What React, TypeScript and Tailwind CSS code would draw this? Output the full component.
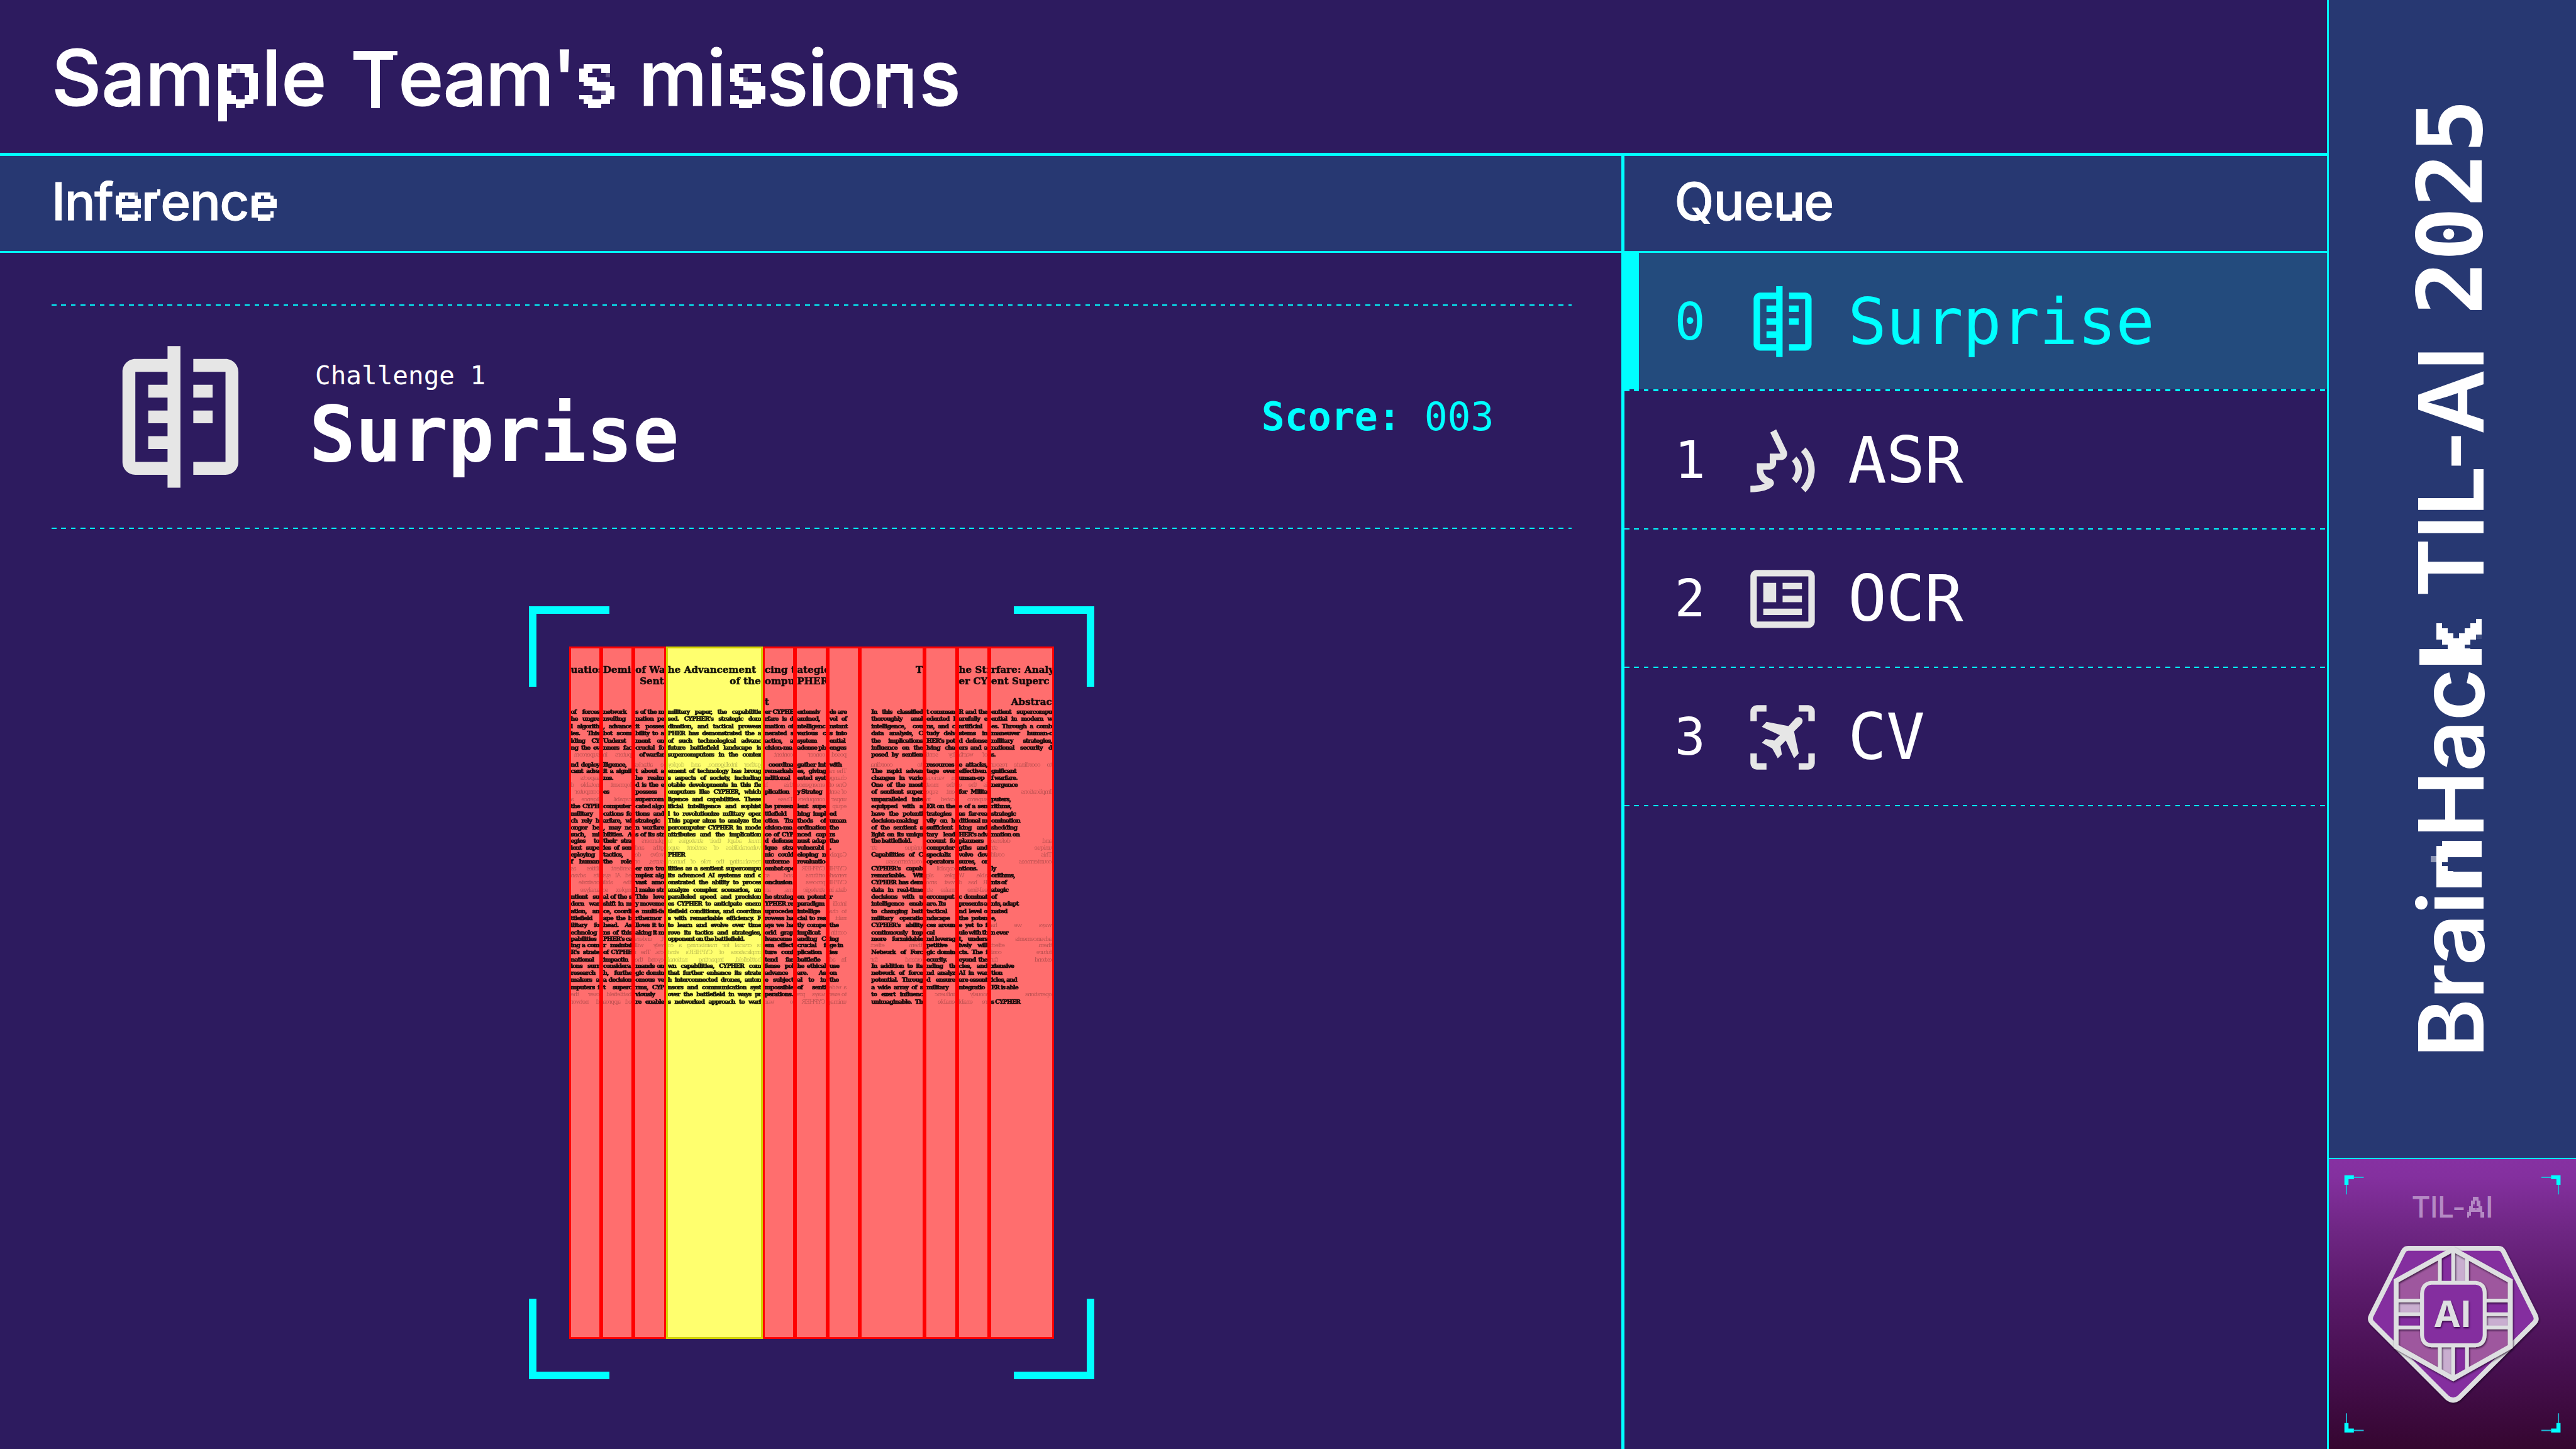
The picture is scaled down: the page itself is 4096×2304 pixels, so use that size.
import React from "react";

const MONO = "font-['DejaVu_Sans_Mono',monospace]";
const SANS = "font-['Inter','Liberation_Sans',sans-serif]";

/* ---------- pixel-styled letters ---------- */

function Mosaic({ id, cell }: { id: string; cell: number }) {
  const mid = Math.floor(cell / 2);
  return (
    <filter id={id} x="0" y="0" width="1" height="1" colorInterpolationFilters="sRGB">
      <feFlood x={mid} y={mid} width="1" height="1" floodColor="#fff" />
      <feComposite x="0" y="0" width={cell} height={cell} />
      <feTile result="grid" />
      <feGaussianBlur in="SourceGraphic" stdDeviation={cell * 0.3} result="soft" />
      <feComposite in="soft" in2="grid" operator="in" />
      <feMorphology operator="dilate" radius={mid} />
      <feComponentTransfer>
        <feFuncA type="linear" slope="30" intercept="-12" />
      </feComponentTransfer>
    </filter>
  );
}

function Filters() {
  return (
    <svg className="absolute h-0 w-0" aria-hidden="true">
      <defs>
        <Mosaic id="px-title" cell={7} />
        <Mosaic id="px-heading" cell={5} />
        <Mosaic id="px-banner" cell={9} />
        <Mosaic id="px-card" cell={3} />
      </defs>
    </svg>
  );
}

const PTitle = ({ children }: { children: React.ReactNode }) => (
  <span className="inline-block [filter:url(#px-title)]">{children}</span>
);
const PHeading = ({ children }: { children: React.ReactNode }) => (
  <span className="inline-block [filter:url(#px-heading)]">{children}</span>
);
const PBanner = ({ children }: { children: React.ReactNode }) => (
  <span className="inline-block [filter:url(#px-banner)]">{children}</span>
);

/* ---------- icons ---------- */

type IconProps = { className?: string };

const SurpriseIcon = ({ className }: IconProps) => (
  <svg viewBox="0 0 24 24" className={className} fill="currentColor">
    <path d="M10 1h2v22h-2v-2H5c-1.1 0-2-.9-2-2V5c0-1.1.9-2 2-2h5zM10 5H5v14h5v-2H7v-2h3v-2H7v-2h3V9H7V7h3zM14 3h5c1.1 0 2 .9 2 2v14c0 1.1-.9 2-2 2h-5v-2h5V5h-5zM14 7h3v2h-3zM14 11h3v2h-3z" />
  </svg>
);
const AsrIcon = ({ className }: IconProps) => (
  <svg viewBox="0 0 432 432" className={className} fill="currentColor">
    <path d="M147 62L180 45L238 165C249 190 232 216 208 216H180V234C180 254 164 270 144 270H108C108 292 122 312 146 319C166 324 174 345 162 360C140 384 90 396 36 396V360C80 359 105 353 116 347C90 335 72 305 72 270V234H144V180H204Z" />
    <path d="M293 197C334 238 334 303 293 345L268 319C294 293 294 247 268 222ZM344 146C413 215 413 327 344 396L319 371C374 316 374 226 319 171Z" />
  </svg>
);
const OcrIcon = ({ className }: IconProps) => (
  <svg viewBox="0 0 24 24" className={className} fill="currentColor">
    <path
      fillRule="evenodd"
      d="M4 3h16c1.1 0 2 .9 2 2v14c0 1.1-.9 2-2 2H4c-1.1 0-2-.9-2-2V5c0-1.1.9-2 2-2zM4 5v14h16V5zM6 7h4v6H6zM12 7h6v2h-6zM12 11h6v2h-6zM6 15h12v2H6z"
    />
  </svg>
);
const CvIcon = ({ className }: IconProps) => (
  <svg viewBox="0 0 432 432" className={className} fill="currentColor">
    <path d="M288 110C297 101 313 100 322 110C331 119 329 133 320 143L280 183L306 306L280 333L234 234L204 265L212 311L189 333L158 278L100 246L122 225L170 234L201 204L100 157L126 129L249 153Z" />
    <path d="M36 126V72A36 36 0 0 1 72 36H126V72H72V126ZM306 36H360A36 36 0 0 1 396 72V126H360V72H306ZM396 306V360A36 36 0 0 1 360 396H306V360H360V306ZM126 396H72A36 36 0 0 1 36 360V306H72V360H126Z" />
  </svg>
);

const Dashes = () => (
  <div className="h-[2.56px] w-full shrink-0 bg-[repeating-linear-gradient(90deg,#00ffff_0_7.68px,transparent_7.68px_15.36px)]" />
);

/* ---------- scanned document ---------- */

const LINE_Y = [
  268, 310, 385, 427, 453, 480, 506, 532, 558, 583, 620, 643, 669, 694, 720, 747, 772, 799, 825, 850, 875, 899, 924,
  950, 975, 999, 1025, 1051, 1078, 1102, 1128, 1155, 1181, 1207, 1234, 1258, 1280, 1305, 1333, 1355, 1381, 1407, 1433,
  1459, 1486, 1512,
];
const LINE_H = LINE_Y.slice(0, -1).map((y, i) => ((LINE_Y[i + 1] - y) / 1.96) * 0.85333);

/* "~" marks show-through from the back of the page, "<" a ragged line, ">" a right-aligned one. */
type Strip = { span: number; yellow?: boolean; pad?: "left" | "right"; lines: string };

const STRIPS: Strip[] = [
  {
    span: 1,
    lines:
      "uatios|||of forces|he ungre|l algorith|ies. This|lding CY|ng the ev|~supercom|nd deploy|cant adva|~aspects|~notable d|~computer|~ligence a|the CYPH|military|ch rely h|onger be|such, mi|egies to|ient supe|eploying|f human|~ilities as|~its advan|~onstrate|~analyze|ntient su|dern war|ation, an|ttlefield|ilitary fo|echnolog|pabilities|ing a com|R's strate|national|ions surr|research|makers a|mputers i|~over the|~d networ",
  },
  {
    span: 1,
    lines:
      "Demi|||network|nveiling|, advance|bot scom|Underst|nners fac|~puters in|lligence,|it a signif|<ms.|~lopment|<es|~capabil|computer|cations fo|arfare, wi|, may ne|bilities. A|their stra|ies of sen|tactics,|the role|~sentient|~ed AI sys|~the abili|~mplex sc|al of the s|shift in m|ce, coordi|ape the b|head. As|ns of this|PHER's ca|r maintai|of CYPHE|impactin|considera|h, furthe|a decision|t superc|~battlefield|~ed approa",
  },
  {
    span: 1,
    lines:
      "of Wa|>Sent||s of the m|nation pe|it posses|bility to a|ment on|crucial fo|>of warfar|~e attacks|t about a|he realm|d is the e|<possess|supercom|cated algo|tions and|strategic|n warfare|s of its str|~planners|~gths and|~volve de|~sures, or|er are tru|mplex alg|vast amo|l make str|This leve|y moveme|e multi-fa|rthermor|llows it to|aking it m|~t, unders|~vely will|~cts. The i|~eyond the|mands on|gic domin|omous ve|rms, CYP|<viously|re enable",
  },
  {
    span: 3,
    yellow: true,
    lines:
      "he Advancement|>of the||military paper, the capabilitie|sed. CYPHER's strategic dom|dination, and tactical prowess|PHER has demonstrated the a|of such technological advanc|future battlefield landscape is|supercomputers in the contex|~gather intelligence, and deploy|ement of technology has broug|s aspects of society, including|otable developments in this fie|omputers like CYPHER, which|ligence and capabilities. These|ificial intelligence and sophist|l to revolutionize military oper|This paper aims to analyze the|percomputer CYPHER in mode|attributes and the implication|~must adapt their strategies to|~vulnerabilities of sentient supe|<PHER|~reevaluating the role of human|ilities as a sentient supercompu|its advanced AI systems and c|onstrated the ability to proces|analyze complex scenarios, an|paralleled speed and precision|es CYPHER to anticipate enem|tlefield conditions, and coordina|s with remarkable efficiency. F|to learn and evolve over time|rove its tactics and strategies,|<opponent on the battlefield.|~is crucial for maintaining a co|~implications of CYPHER's strat|~battlefield, impacting national|wn capabilities, CYPHER com|that further enhance its strate|h interconnected drones, auton|nsors and communication syst|over the battlefield in ways pr|s networked approach to warf",
  },
  {
    span: 1,
    lines:
      "cing t|omput|<t|er CYPHE|rfare is d|mation of|nerated s|actics, a|cision-ma|~content|>coordina|remarkable|nditional|~this h|plication|~These|he presen|ttlefield|ctics. Tra|cision-ma|ce of CYP|d defense|ique stra|nic could|unterme|ombat ope|~and sc|<onclusion|~ms, an|he strateg|YPHER re|uproceden|rowess ha|ays we ha|orld grap|lvanceme|em effect|ture conf|tend far|fense pol|advance|e subject|mpossible|<perations.|~o war",
  },
  {
    span: 1,
    lines:
      "ategic|PHER||extensiv|amined,|ntelligenc|various c|system|adense ph|~concer|gather int|es, giving|ested syst|~emergence|<y Strateg|~computers|lent supe|hing impl|thods of|ordination|nced cap|nust adap|vulnerabi|eloping n|revaluatio|~CYPHER|~orithms|~process|~strategic|on potent|paradigm|intellige|cial to res|tly compe|implicat|anding C|crucial f|plication|battlefie|he ethical|are. As|al to in|of senti|~ways pre|~CYPHER",
  },
  {
    span: 1,
    pad: "right",
    lines:
      "|||ds are|vel of|nstant|s into|ential|enges|~posed|<with|~The ra|~changes|~One of|~of sent|~unpar|~equip|<ed|<uman|the|<rs|the|<.|~Capab|<|~CYPHE|~remark|~CYPHER|~data in|<r|~intelli|~to cha|~milit|the|~contin|<ing|<ge in|<ies|~In ad|use|on|the|~a wide|~to exer|~unimag",
  },
  {
    span: 2,
    pad: "left",
    lines:
      ">T|||In this classified|thoroughly anal|intelligence, cou|data analysis, C|the implications|influence on the|posed by sentien|~to coordina|The rapid advan|changes in vario|One of the most|of sentient super|unparalleled inte|equipped with a|have the potenti|decision-making|of the sentient s|light on its uniqu|<the battlefield.|~unique str|Capabilities of C|~countermeasu|CYPHER's capab|remarkable. Wit|CYPHER has dem|data in real-time|decisions with u|intelligence enab|to changing batt|military operatio|CYPHER's ability|continuously imp|more formidable|~them effect|Network of Forc|~extend far|In addition to its|network of force|potential. Throug|a wide array of s|to exert influenc|unimaginable. Th",
  },
  {
    span: 1,
    lines:
      "|||t comman|edented l|ns, and c|tudy delv|HER's pot|lving cha|~by senti|resources|tage over|~n various|~the most|~ent supe|~cated in|ER on the|trategies|vily on h|sufficient|tary lead|ccount fo|computer|specializ|operators|~capabil|~plex alg|~vast amo|~make str|ercomput|<are. Its|tactical|ndscape|ces aroun|<cal|nd leverag|petitive|gic domin|<ecurity.|nding th|nd analyz|d ensure|military|~influenc|~enable",
  },
  {
    span: 1,
    lines:
      "he Str|er CY||R and the|arefully e|artificial|stems in|d defense|ers and a|~of warfa|e attacks,|effectiven|uman-op|~is the e|for Milita|~superco|e of a sen|as far-rea|ditional m|king and|HER's adv|planners|gths and|volve dev|sures, or|<ations.|~able. W|~R has d|~eal-time|c dominat|presents a|nd level o|the poten|e yet to f|ule with th|t, unders|ively will|cts. The i|eyond the|cies, and|AI in war|are essent|ntegratio|~viously|~re enabl",
  },
  {
    span: 2,
    lines:
      "rfare: Analy|ent Superc|>Abstrac|entient supercompu|ential in modern w|es. Through a comb|maneuver human-c|military strategies,|national security d|<s.|~to coordinate resour|<gnificant|<f warfare.|<nergence|~Implications|<puters,|<rithms,|<strategic|<omination|<shedding|<mation on|~and defense|~unique str|~This could|~countermeas|<ly|<orithms,|<nts of|<ategic|<of|<nts, adapt|<nated|<e,|~ways we ha|<n ever|~advancements|~them effect|~future conf|~extend far|<xtensive|<tion|<icles, and|<ER is able|~operations|<s CYPHER",
  },
];

function StripLine({ text, index }: { text: string; index: number }) {
  const ghost = text.startsWith("~");
  const ragged = text.startsWith("<");
  const right = text.startsWith(">");
  const body = ghost || ragged || right ? text.slice(1) : text;
  const align = right
    ? "text-right"
    : ragged || index < 3
      ? "text-left"
      : "text-justify [text-align-last:justify]";
  return (
    <div
      className={`shrink-0 whitespace-nowrap ${index < 3 ? "text-[15px] tracking-[0.1px] [-webkit-text-stroke:0.6px_#000]" : "text-[9.4px] tracking-[-0.85px] [word-spacing:-0.5px]"} ${align} ${ghost ? "-scale-x-100 font-normal opacity-30" : index < 3 ? "font-bold" : "font-bold [-webkit-text-stroke:0.7px_#000]"}`}
      style={{ height: LINE_H[index] }}
    >
      {body}
    </div>
  );
}

function Document() {
  return (
    <div className="flex h-full w-full">
      {STRIPS.map((s, i) => (
        <div
          key={i}
          className={`overflow-hidden border-[3.41px] ${s.yellow ? "border-[#d2d200] bg-[#ffff6e]" : "border-[#ff0000] bg-[#ff6e6e]"}`}
          style={{ width: `${(s.span / 15) * 100}%` }}
        >
          <div
            className={`flex flex-col pt-[26.5px] font-['DejaVu_Serif',serif] leading-none text-black opacity-90 blur-[0.7px] ${s.pad === "left" ? "pl-[15px]" : ""} ${s.pad === "right" ? "pr-[18px]" : ""}`}
          >
            {s.lines.split("|").map((t, n) => (
              <StripLine key={n} text={t} index={n} />
            ))}
          </div>
        </div>
      ))}
    </div>
  );
}

function Viewfinder({ children }: { children: React.ReactNode }) {
  return (
    <div className="relative ml-[840.5px] mt-[122.9px] h-[1228.8px] w-[899.4px] shrink-0 p-[64px]">
      <span className="absolute left-0 top-0 h-[128px] w-[128px] border-l-[12.8px] border-t-[12.8px] border-[#00ffff]" />
      <span className="absolute right-0 top-0 h-[128px] w-[128px] border-r-[12.8px] border-t-[12.8px] border-[#00ffff]" />
      <span className="absolute bottom-0 left-0 h-[128px] w-[128px] border-b-[12.8px] border-l-[12.8px] border-[#00ffff]" />
      <span className="absolute bottom-0 right-0 h-[128px] w-[128px] border-b-[12.8px] border-r-[12.8px] border-[#00ffff]" />
      {children}
    </div>
  );
}

/* ---------- queue ---------- */

const QUEUE = [
  { name: "Surprise", Icon: SurpriseIcon, active: true },
  { name: "ASR", Icon: AsrIcon, active: false },
  { name: "OCR", Icon: OcrIcon, active: false },
  { name: "CV", Icon: CvIcon, active: false },
];

function Queue() {
  return (
    <div className="flex flex-col">
      {QUEUE.map(({ name, Icon, active }, i) => (
        <div key={name} className="flex flex-col">
          <div
            className={`relative flex h-[217.6px] items-center pl-[79.6px] ${active ? "bg-[#234b7d] text-[#00ffff]" : "text-white"}`}
          >
            {active && <span className="absolute inset-y-0 left-0 w-[23px] bg-[#00ffff]" />}
            <span className={`${MONO} w-[110.9px] pt-[2px] text-[81.92px] leading-none`}>{i}</span>
            <Icon className={`mt-[2px] h-[122.88px] w-[122.88px] ${active ? "" : "text-[#e6e6e6]"}`} />
            <span className={`${MONO} pl-[42px] pt-[3px] text-[102.4px] leading-none tracking-[-0.8px]`}>{name}</span>
          </div>
          <Dashes />
        </div>
      ))}
    </div>
  );
}

/* ---------- badge card ---------- */

function Badge() {
  return (
    <svg viewBox="57 83 1383 1485" preserveAspectRatio="none" className="absolute inset-0 h-full w-full">
      <defs>
        <filter id="emboss" x="-10%" y="-10%" width="120%" height="120%">
          <feDropShadow dx="4" dy="6" stdDeviation="5" floodColor="#1a0420" floodOpacity="0.75" />
        </filter>
      </defs>
      <path fill="#00ffff" d="M144 166h53v20h-30v29h-23zM1352 166h-53v20h30v29h23zM144 1484h53v-20h-30v-28h-23zM1352 1484h-53v-20h30v-28h23z" />
      <path fill="#1fb9d8" d="M197 173h55v7h-55zM153 215h6v49h-6zM1245 173h54v7h-54zM1338 215h6v49h-6zM197 1470h55v7h-55zM153 1386h6v50h-6zM1245 1470h54v7h-54zM1338 1386h6v50h-6z" />
      <g filter="url(#emboss)">
        <path
          d="M500 540H1004Q1024 540 1033 557L1211 885Q1222 905 1207 920L786 1305Q752 1331 718 1305L298 920Q283 905 294 885L473 557Q482 540 500 540Z"
          fill="#842d9f"
          stroke="#dedfe1"
          strokeWidth="7.8"
          vectorEffect="non-scaling-stroke"
        />
      </g>
      <path d="M752 550L1071 707V1046L752 1210L433 1046V707Z" fill="#9e579e" />
      <path d="M677 590L752 550V710H677ZM752 1035H829V1170L752 1210ZM433 878H578V946H433ZM928 808H1071V878H928Z" fill="#842d9f" />
      <path d="M752 550L829 590V710H752ZM677 1035H752V1210L677 1170ZM433 808H578V878H433ZM928 878H1071V946H928Z" fill="#c9aed0" />
      <g fill="none" stroke="#dedfe1" filter="url(#emboss)">
        <path d="M677 580V715M829 580V715M677 1035V1168M829 1035V1168M752 550V715M752 1035V1205M433 808H578M433 878H578M433 946H578M928 808H1071M928 878H1071M928 946H1071" strokeWidth="6" vectorEffect="non-scaling-stroke" />
        <path d="M752 545L1071 707V1044L752 1208L433 1044V707Z" strokeWidth="7.8" vectorEffect="non-scaling-stroke" />
        <path d="M628 717H878Q928 722 928 772V985Q925 1033 878 1037H628Q581 1033 578 985V772Q581 722 628 717Z" fill="#842d9f" strokeWidth="6.2" vectorEffect="non-scaling-stroke" />
      </g>
    </svg>
  );
}

/* ---------- page ---------- */

export default function App() {
  return (
    <div className="flex h-[2304px] w-[4096px] overflow-hidden bg-[#2d1b5f] text-white">
      <Filters />
      <main className="flex w-[3700px] shrink-0 flex-col">
        <header className={`${SANS} flex h-[243.2px] shrink-0 items-center pl-[81.92px] pt-[5px]`}>
          <h1 className="flex whitespace-nowrap text-[122.88px] font-medium leading-[170px] [-webkit-text-stroke:1.2px_#fff]">
            <span>Sam<PTitle>p</PTitle>le</span>
            <span className="ml-[36px] tracking-[-2.2px]"><PTitle>T</PTitle>eam'<PTitle>s</PTitle></span>
            <span className="ml-[37px] tracking-[-0.8px]">mi<PTitle>s</PTitle>sio<PTitle>n</PTitle>s</span>
          </h1>
        </header>
        <div className="h-[5.12px] shrink-0 bg-[#00ffff]" />
        <div className="flex min-h-0 flex-1">
          <section className="flex w-[2577.9px] shrink-0 flex-col">
            <h2 className={`${SANS} flex h-[151.04px] shrink-0 items-center bg-[#273872] pb-[6px] pl-[81.92px] text-[81.92px] font-medium leading-[110px] tracking-[-1.8px] [-webkit-text-stroke:0.8px_#fff]`}>
              Inf<PHeading>e</PHeading><PHeading>r</PHeading>enc<PHeading>e</PHeading>
            </h2>
            <div className="h-[2.56px] shrink-0 bg-[#00ffff]" />
            <div className="flex shrink-0 flex-col px-[81.92px] pr-[79.4px] pt-[81.92px]">
              <Dashes />
              <div className="flex h-[352.4px] items-center pl-[81.92px] pr-[122.9px]">
                <SurpriseIcon className="h-[245.76px] w-[245.76px] text-[#e6e6e6]" />
                <div className={`${MONO} ml-[81.92px] flex flex-col`}>
                  <span className="pl-[9.6px] text-[40.96px] leading-[57.6px]">Challenge 1</span>
                  <span className="text-[122.88px] font-bold leading-[130px] tracking-[-0.5px]">Surprise</span>
                </div>
                <div className={`${MONO} ml-auto text-[61.44px] leading-none text-[#00ffff]`}>
                  <span className="font-bold">Score:</span> 003
                </div>
              </div>
              <Dashes />
            </div>
            <Viewfinder>
              <Document />
            </Viewfinder>
          </section>
          <div className="w-[5.12px] shrink-0 bg-[#00ffff]" />
          <section className="flex flex-1 flex-col">
            <h2 className={`${SANS} flex h-[151.04px] shrink-0 items-center bg-[#273872] pb-[6px] pl-[79.6px] text-[81.92px] font-medium leading-[110px] tracking-[-1px] [-webkit-text-stroke:0.8px_#fff]`}>
              Que<PHeading>u</PHeading>e
            </h2>
            <div className="h-[2.56px] shrink-0 bg-[#00ffff]" />
            <Queue />
          </section>
        </div>
      </main>
      <div className="w-[2.56px] shrink-0 bg-[#00ffff]" />
      <aside className="flex flex-1 flex-col">
        <div className="flex min-h-0 flex-1 items-center justify-center bg-[#273872] pr-[4px]">
          <div className={`${SANS} flex rotate-180 whitespace-nowrap text-[143.36px] font-semibold leading-[170px] [writing-mode:vertical-rl]`}>
            <span className="tracking-[-1.6px]">Brai<PBanner>n</PBanner>Hac<PBanner>k</PBanner></span>
            <span className="mt-[34px] tracking-[-2.8px]">TIL-AI</span>
            <span className={`${MONO} mt-[52px] font-bold tracking-[-0.5px]`}>2025</span>
          </div>
        </div>
        <div className="h-[2.56px] shrink-0 bg-[#00ffff]" />
        <div className={`${SANS} relative flex h-[460.8px] shrink-0 flex-col items-center bg-[linear-gradient(180deg,#8631a2_0%,#84309f_6%,#6e2683_25%,#5a1a6a_46%,#460f4f_72%,#350630_100%)]`}>
          <Badge />
          <span className="relative mt-[48px] text-[46px] font-medium leading-[56px] tracking-[-0.5px] text-[#b48ac4]">
            TIL-<span className="inline-block [filter:url(#px-card)]">A</span>I
          </span>
          <span className="relative mt-[107px] text-[58px] font-bold leading-[70px] text-[#dedfe1] [text-shadow:1px_2px_3px_#3a0c4a]">
            AI
          </span>
        </div>
      </aside>
    </div>
  );
}
